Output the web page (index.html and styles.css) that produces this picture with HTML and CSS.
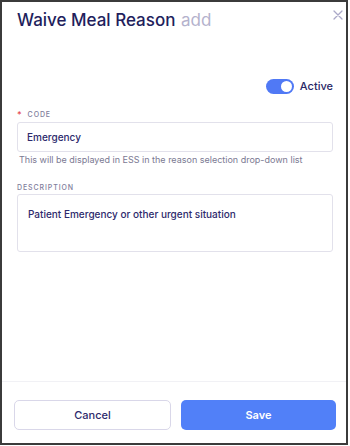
FILE: index.html
```html
<!DOCTYPE html>
<html lang="en">
<head>
  <meta charset="UTF-8">
  <meta name="viewport" content="width=device-width, initial-scale=1.0">
  <title>Waive Meal Reason</title>
  <link rel="stylesheet" href="styles.css">
</head>
<body>
  <div class="modal">
    <div class="modal-header">
      <h1>Waive Meal Reason <span class="mode">add</span></h1>
      <span class="close">
        <svg width="10" height="10" viewBox="0 0 10 10">
          <path d="M1 1L9 9M9 1L1 9" stroke="#aaa8c8" stroke-width="1.3" stroke-linecap="round"/>
        </svg>
      </span>
    </div>

    <div class="modal-body">
      <div class="toggle-row">
        <span class="toggle on"><span class="knob"></span></span>
        <span class="toggle-label">Active</span>
      </div>

      <label class="field-label"><span class="required">*</span>Code</label>
      <input class="field" type="text" value="Emergency">
      <p class="hint">This will be displayed in ESS in the reason selection drop-down list</p>

      <label class="field-label desc-label">Description</label>
      <textarea class="field area">Patient Emergency or other urgent situation</textarea>
    </div>

    <div class="modal-footer">
      <button class="btn btn-cancel">Cancel</button>
      <button class="btn btn-save">Save</button>
    </div>
  </div>
</body>
</html>
```

FILE: styles.css
```css
body {
  margin: 0;
  font-family: Inter, "Noto Sans", sans-serif;
  background-color: #fff;
}

.modal {
  box-sizing: border-box;
  width: 348px;
  height: 445px;
  border: 2px solid #3b3b3b;
  display: flex;
  flex-direction: column;
  background: #fff;
}

.modal-header {
  display: flex;
  justify-content: space-between;
  align-items: flex-start;
  padding: 0 3px 0 15px;
}

.modal-header h1 {
  margin: 6px 0 0;
  font-size: 17px;
  line-height: 24px;
  font-weight: 500;
  color: #221e5c;
}

.modal-header .mode {
  font-weight: 400;
  color: #b4b2cd;
  margin-left: 1px;
}

.close {
  display: flex;
  margin-top: 8px;
  cursor: pointer;
}

.modal-body {
  flex: 1;
  display: flex;
  flex-direction: column;
  padding: 0 13px 0 15px;
}

.toggle-row {
  display: flex;
  justify-content: flex-end;
  align-items: center;
  gap: 6px;
  margin-top: 46px;
  height: 16px;
}

.toggle {
  width: 28px;
  height: 15px;
  border-radius: 8px;
  background: #c9c8d8;
  display: flex;
  align-items: center;
  padding: 0 2px;
  box-sizing: border-box;
}

.toggle.on {
  background: #5079f5;
  justify-content: flex-end;
}

.toggle .knob {
  width: 11px;
  height: 11px;
  border-radius: 50%;
  background: #fff;
}

.toggle-label {
  font-size: 11px;
  font-weight: 500;
  color: #2a2766;
}

.field-label {
  display: block;
  margin-top: 16px;
  margin-bottom: 2px;
  font-size: 7px;
  line-height: 10px;
  letter-spacing: 0.9px;
  text-transform: uppercase;
  font-weight: 500;
  color: #807d9b;
}

.field-label .required {
  color: #e5484d;
  font-size: 9px;
  margin-right: 5px;
  vertical-align: -1px;
}

.desc-label {
  margin-top: 17px;
  margin-bottom: 1px;
}

.field {
  box-sizing: border-box;
  width: 100%;
  height: 30px;
  margin: 0;
  border: 1px solid #e2e1eb;
  border-radius: 3px;
  padding: 0 9px;
  font-family: inherit;
  font-size: 10px;
  font-weight: 500;
  color: #2d2a6c;
  outline: none;
  background: #fff;
}

.field.area {
  height: 58px;
  padding: 12px 10px;
  line-height: 14px;
  resize: none;
}

.hint {
  margin: 2px 0 0 2px;
  font-size: 9px;
  line-height: 12px;
  color: #7b7992;
}

.modal-footer {
  display: flex;
  gap: 10px;
  border-top: 1px solid #f1f1f5;
  padding: 18px 10px 13px 12px;
}

.btn {
  flex: 1;
  height: 30px;
  border-radius: 5px;
  font-family: inherit;
  font-size: 11px;
  font-weight: 500;
  cursor: pointer;
}

.btn-cancel {
  background: #fff;
  border: 1px solid #d9d7e9;
  color: #2d2a6c;
}

.btn-save {
  background: #5180f8;
  border: none;
  color: #fff;
  font-weight: 600;
}
```
